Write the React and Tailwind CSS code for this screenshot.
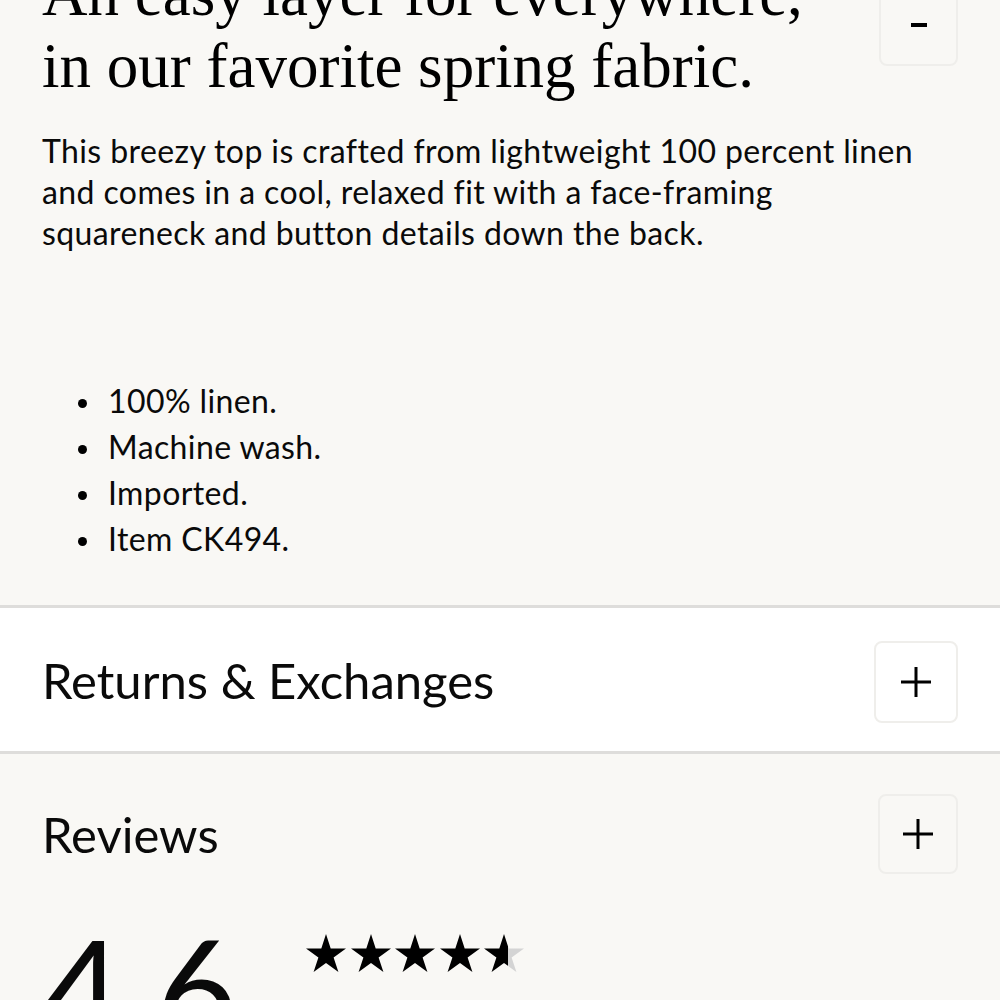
import React from "react";

const sans = { fontFamily: "Lato, 'Noto Sans', sans-serif" };

function Star({ fill = 1 }) {
  const id = `g${Math.round(fill * 100)}`;
  return (
    <svg width="40" height="40" viewBox="0 0 40 40" className="block">
      <defs>
        <linearGradient id={id} x1="0" x2="1" y1="0" y2="0">
          <stop offset={fill} stopColor="#000" />
          <stop offset={fill} stopColor="#d4d4d4" />
        </linearGradient>
      </defs>
      <polygon
        points="20,0 24.7,14.5 40,14.5 27.6,23.5 32.4,38 20,29 7.6,38 12.4,23.5 0,14.5 15.3,14.5"
        fill={`url(#${id})`}
      />
    </svg>
  );
}

function BoxButton({ children, className = "" }) {
  return (
    <div
      className={`flex shrink-0 items-center justify-center rounded-[8px] border-2 border-[#efeeeb] ${className}`}
    >
      {children}
    </div>
  );
}

function Plus() {
  return (
    <svg width="32" height="32" viewBox="0 0 32 32">
      <path d="M16 1V31M1 16H31" stroke="#000" strokeWidth="3" />
    </svg>
  );
}

export default function App() {
  return (
    <div className="min-h-[1000px] overflow-hidden bg-[#f9f8f5] text-[#0a0a0a]" style={sans}>
      <section className="-mt-[42px] border-b-[3px] border-[#dedddb] px-[42px] pb-[43px]">
        <div className="flex items-start justify-between">
          <h2
            className="max-w-[800px] text-[63px] leading-[72px] text-black"
            style={{ fontFamily: "'Liberation Serif', serif", fontWeight: 400 }}
          >
            An easy layer for everywhere, in our favorite spring fabric.
          </h2>
          <BoxButton className="mt-[25px] h-[83px] w-[79px]">
            <div className="h-[4px] w-[16px] bg-black" />
          </BoxButton>
        </div>
        <p className="mt-[28px] max-w-[880px] text-[32px] leading-[41px] tracking-[0.4px]">
          This breezy top is crafted from lightweight 100 percent linen and comes in a cool, relaxed fit with a
          face-framing squareneck and button details down the back.
        </p>
        <ul className="mt-[125px] flex flex-col text-[32px] leading-[46px] tracking-[0.4px]">
          {["100% linen.", "Machine wash.", "Imported.", "Item CK494."].map((t) => (
            <li key={t} className="flex items-center">
              <span className="ml-[36px] mr-[21px] mt-[4px] h-[9px] w-[9px] rounded-full bg-black" />
              {t}
            </li>
          ))}
        </ul>
      </section>
      <section className="flex h-[146px] items-center justify-between border-b-[3px] border-[#dedddb] bg-white px-[42px]">
        <h3 className="mt-[2px] text-[49px] leading-none">Returns &amp; Exchanges</h3>
        <BoxButton className="mt-[4px] h-[82px] w-[84px]">
          <Plus />
        </BoxButton>
      </section>
      <section className="px-[42px] pt-[40px]">
        <div className="flex items-center justify-between">
          <h3 className="text-[49px] leading-none">Reviews</h3>
          <BoxButton className="h-[80px] w-[80px]">
            <Plus />
          </BoxButton>
        </div>
        <div className="mt-[38px] flex items-start gap-[69px]">
          <div className="text-[140px] font-normal leading-[150px]">4.6</div>
          <div className="mt-[22px] flex gap-[4.4px]">
            <Star />
            <Star />
            <Star />
            <Star />
            <Star fill={0.6} />
          </div>
        </div>
      </section>
    </div>
  );
}
